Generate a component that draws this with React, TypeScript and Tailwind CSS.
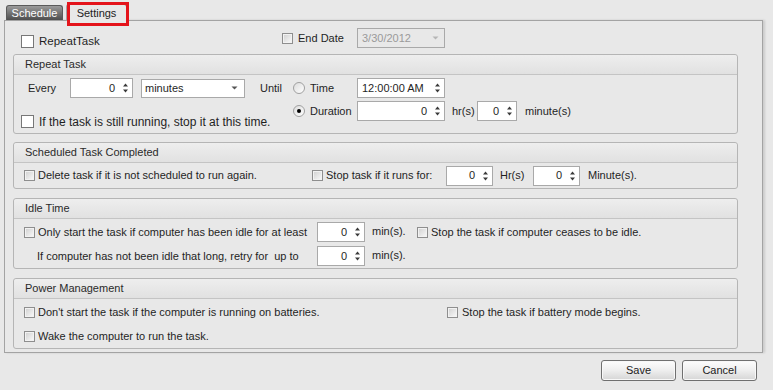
import React from 'react';

// tiny up/down arrows used by the numeric spinners
const Arrows: React.FC = () => (
  <svg width="7" height="12" viewBox="0 0 7 12" className="shrink-0">
    <path d="M1 4.5 L3.5 1.5 L6 4.5 Z" fill="#3a3a3a" />
    <path d="M1 7.5 L3.5 10.5 L6 7.5 Z" fill="#3a3a3a" />
  </svg>
);

const DownArrow: React.FC<{ color?: string }> = ({ color = '#555' }) => (
  <svg width="7" height="4" viewBox="0 0 7 4" className="shrink-0">
    <path d="M0.5 0.5 L3.5 3.5 L6.5 0.5 Z" fill={color} />
  </svg>
);

const Spinner: React.FC<{ className: string; value?: string; left?: boolean }> = ({
  className,
  value = '0',
  left = false,
}) => (
  <div className={`flex items-center bg-white border border-[#a9a9a9] pr-[3px] shrink-0 ${className}`}>
    <span className={left ? 'flex-1 text-left pl-[4px]' : 'flex-1 text-right pr-[7px]'}>{value}</span>
    <Arrows />
  </div>
);

const SmallCheck: React.FC = () => (
  <span className="block w-[11px] h-[11px] shrink-0 border border-[#8e8e8e] bg-linear-to-br from-[#cfcfcf] to-[#fbfbfb] shadow-[inset_0_0_0_1px_#f2f2f2]" />
);

const BigCheck: React.FC = () => (
  <span className="block w-[13px] h-[13px] shrink-0 border border-[#777] bg-white" />
);

const Radio: React.FC<{ checked?: boolean }> = ({ checked }) => (
  <span className="flex items-center justify-center w-[12px] h-[12px] shrink-0 rounded-full border border-[#a0a0a0] bg-linear-to-br from-[#dcdcdc] to-white">
    {checked && <span className="block w-[4px] h-[4px] rounded-full bg-black" />}
  </span>
);

const Group: React.FC<{ title: string; className: string; children: React.ReactNode }> = ({
  title,
  className,
  children,
}) => (
  <div className={`ml-[8px] w-[725px] border border-[#b5b5b5] rounded-[3px] flex flex-col ${className}`}>
    <div className="h-[20px] shrink-0 flex items-center pl-[11px] border-b border-[#c4c4c4] bg-linear-to-b from-[#eeeeee] to-[#e1e1e1] rounded-t-[3px] text-[#2a2a2a]">
      {title}
    </div>
    {children}
  </div>
);

const Button: React.FC<{ label: string }> = ({ label }) => (
  <button className="w-[75px] h-[21px] rounded-[3px] border border-[#707070] bg-linear-to-b from-[#fdfdfd] via-[#eeeeee] to-[#d6d6d6] text-[#222] shadow-[inset_0_0_0_1px_#f8f8f8]">
    {label}
  </button>
);

export default function App() {
  return (
    <div className="w-[773px] h-[390px] overflow-hidden bg-[#e8e8e8] text-[11px] leading-none text-[#1f1f1f] font-['Liberation_Sans',Arial,sans-serif]">
      {/* tabs */}
      <div className="h-[20px] flex items-end pl-[6px]">
        <div className="w-[57px] h-[15px] flex items-center justify-center rounded-t-[3px] border border-b-0 border-[#5a5a5a] bg-linear-to-b from-[#9b9b9b] to-[#4e4e4e] text-white">
          Schedule
        </div>
        <div className="relative ml-[3px] w-[61px] h-[17px] -mb-px z-10 flex items-center justify-center rounded-t-[3px] border border-b-0 border-[#a3a3a3] bg-[#e8e8e8] text-[#222]">
          Settings
          <div className="absolute left-[0px] top-[-3px] w-[62px] h-[24px] border-[3px] border-[#e4141b]" />
        </div>
      </div>

      {/* tab page */}
      <div className="ml-[4px] w-[759px] border border-[#a3a3a3] pt-[7px] pb-[3px] shadow-[2px_0_2px_rgba(0,0,0,0.12)]">
        <div className="h-[20px] flex items-start pl-[16px]">
          <div className="w-[261px] mt-[7px] flex items-center gap-[5px] text-[11.5px]">
            <BigCheck />
            <span>RepeatTask</span>
          </div>
          <div className="w-[75px] h-[20px] flex items-center gap-[5px]">
            <SmallCheck />
            <span>End Date</span>
          </div>
          <div className="w-[88px] h-[20px] flex items-center justify-between border border-[#a9a9a9] pl-[4px] pr-[5px] text-[#9a9a9a]">
            <span>3/30/2012</span>
            <DownArrow color="#b5b5b5" />
          </div>
        </div>

        <Group title="Repeat Task" className="mt-[6px] h-[80px]">
          <div className="flex pl-[7px] pt-[3px]">
            <div className="w-[239px] flex flex-col">
              <div className="h-[20px] flex items-center">
                <span className="w-[49px] pl-[7px]">Every</span>
                <Spinner className="w-[63px] h-[20px]" />
                <div className="ml-[8px] w-[104px] h-[19px] flex items-center justify-between bg-white border border-[#a9a9a9] pl-[3px] pr-[6px]">
                  <span>minutes</span>
                  <DownArrow />
                </div>
              </div>
              <div className="mt-[17px] flex items-center gap-[5px] whitespace-nowrap text-[12px]">
                <BigCheck />
                <span>If the task is still running, stop it at this time.</span>
              </div>
            </div>
            <div className="w-[33px] h-[20px] flex items-center">Until</div>
            <div className="flex flex-col gap-[3px]">
              <div className="h-[20px] flex items-center">
                <div className="w-[64px] flex items-center gap-[5px]">
                  <Radio />
                  <span>Time</span>
                </div>
                <Spinner className="w-[88px] h-[20px]" value="12:00:00 AM" left />
              </div>
              <div className="h-[20px] flex items-center">
                <div className="w-[64px] flex items-center gap-[5px]">
                  <Radio checked />
                  <span>Duration</span>
                </div>
                <Spinner className="w-[88px] h-[20px]" />
                <span className="w-[32px] pl-[7px]">hr(s)</span>
                <Spinner className="w-[40px] h-[20px]" />
                <span className="pl-[8px]">minute(s)</span>
              </div>
            </div>
          </div>
        </Group>

        <Group title="Scheduled Task Completed" className="mt-[8px] h-[47px]">
          <div className="flex-1 flex items-center pl-[10px] whitespace-nowrap">
            <div className="w-[288px] flex items-center gap-[3px]">
              <SmallCheck />
              <span>Delete task if it is not scheduled to run again.</span>
            </div>
            <div className="w-[134px] flex items-center gap-[3px]">
              <SmallCheck />
              <span>Stop task if it runs for:</span>
            </div>
            <Spinner className="w-[47px] h-[20px]" />
            <span className="w-[40px] pl-[7px]">Hr(s)</span>
            <Spinner className="w-[47px] h-[20px]" />
            <span className="pl-[8px]">Minute(s).</span>
          </div>
        </Group>

        <Group title="Idle Time" className="mt-[9px] h-[71px]">
          <div className="flex flex-col pl-[10px] pt-[3px] gap-[4px] whitespace-nowrap">
            <div className="h-[20px] flex items-center">
              <div className="w-[293px] flex items-center gap-[3px]">
                <SmallCheck />
                <span>Only start the task if computer has been idle for at least</span>
              </div>
              <Spinner className="w-[48px] h-[20px]" />
              <span className="w-[52px] pl-[7px] -mt-[2px]">min(s).</span>
              <div className="flex items-center gap-[3px]">
                <SmallCheck />
                <span>Stop the task if computer ceases to be idle.</span>
              </div>
            </div>
            <div className="h-[20px] flex items-center">
              <span className="w-[293px] pl-[13px]">If computer has not been idle that long, retry for&nbsp; up to</span>
              <Spinner className="w-[48px] h-[20px]" />
              <span className="pl-[7px] -mt-[2px]">min(s).</span>
            </div>
          </div>
        </Group>

        <Group title="Power Management" className="mt-[9px] h-[71px]">
          <div className="flex flex-col pl-[10px] pt-[6px] gap-[10px] whitespace-nowrap">
            <div className="h-[14px] flex items-center">
              <div className="w-[423px] flex items-center gap-[3px]">
                <SmallCheck />
                <span>Don't start the task if the computer is running on batteries.</span>
              </div>
              <div className="flex items-center gap-[4px]">
                <SmallCheck />
                <span>Stop the task if battery mode begins.</span>
              </div>
            </div>
            <div className="h-[14px] flex items-center gap-[3px]">
              <SmallCheck />
              <span>Wake the computer to run the task.</span>
            </div>
          </div>
        </Group>
      </div>

      <div className="mt-[7px] flex justify-end gap-[6px] pr-[16px]">
        <Button label="Save" />
        <Button label="Cancel" />
      </div>
    </div>
  );
}
